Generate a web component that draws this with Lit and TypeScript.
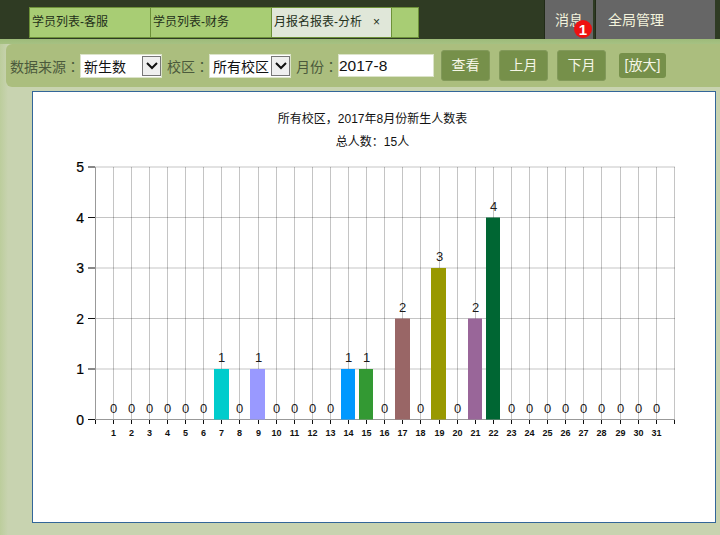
import { LitElement, html, css, svg } from "lit";
import { customElement } from "lit/decorators.js";

const data: Record<number, [number, string, number, number]> = {
  7: [1, "#00cccc", 214, 15], 9: [1, "#9999ff", 250, 15], 14: [1, "#0099ff", 341, 14], 15: [1, "#339933", 359, 14],
  17: [2, "#996666", 395, 15], 19: [3, "#999900", 431, 15], 21: [2, "#996699", 468, 14], 22: [4, "#006633", 486, 14],
};
const X0 = 112.7, STEP = 18.1, Y0 = 419.5, YSTEP = 50.5;
const dx = (d: number) => Math.round(X0 + STEP * (d - 1));
const days = Array.from({ length: 31 }, (_, i) => i + 1);
const levels = [0, 1, 2, 3, 4, 5];

@customElement("app-root")
export class AppRoot extends LitElement {
  static styles = css`
    :host { display: block; width: 720px; height: 535px; overflow: hidden; background: linear-gradient(to right, #bccd9c 0, #c8d3b0 8px); font-family: "Liberation Sans", "Noto Sans CJK SC", sans-serif; }
    .top { height: 39px; background: #2f3b23; display: flex; box-sizing: border-box; }
    .tabs { display: flex; margin: 7px 0 0 29px; height: 32px; }
    .tab { box-sizing: border-box; width: 121px; height: 31px; background: #a8cd74; border: 1px solid #6d9139; border-right: 0; font-size: 12px; color: #24301a; padding-left: 2px; line-height: 29px; display: flex; justify-content: space-between; }
    .tab.active { width: 120px; background: #e0e7d9; }
    .tab.active .x { margin-right: 11px; font-size: 12px; }
    .tab.end { width: 28px; border-right: 1px solid #6d9139; }
    .right { margin-left: auto; display: flex; gap: 2px; margin-right: 5px; }
    .nav { height: 39px; background: #666; color: #f3f3dc; font-size: 14px; line-height: 40px; box-sizing: border-box; position: relative; border-left: 1px solid #222b18; }
    .nav.msg { width: 49px; padding-left: 10px; }
    .nav.all { width: 120px; padding-left: 12px; }
    .badge { position: absolute; left: 29px; top: 20px; width: 18px; height: 18px; border-radius: 50%; background: #ee1111; color: #fff; font-size: 15px; font-weight: bold; line-height: 19px; text-align: center; }
    .band { height: 48px; padding: 5px 0 0 6px; background: linear-gradient(to bottom, #9dbb79 0, #a6c183 5px, transparent 5px); box-sizing: border-box; }
    .toolbar { height: 43px; box-sizing: border-box; background: #abbe7e; border-radius: 6px 0 0 6px; display: flex; align-items: center; padding-left: 4px; font-size: 14px; color: #4b5a3c; }
    .c { font-family: "Noto Sans CJK TC", sans-serif; }
    .sel { box-sizing: border-box; width: 82px; height: 24px; background: #fff; border: 1px solid #dbe3c9; display: flex; align-items: center; color: #111; font-size: 14px; padding-left: 3px; position: relative; }
    .arrow { position: absolute; right: 0; top: 1px; width: 19px; height: 20px; box-sizing: border-box; border: 1px solid #777; background: #efefef; display: flex; align-items: center; justify-content: center; }
    .label2 { margin-left: 5px; }
    .input { box-sizing: border-box; width: 96px; height: 23px; margin-left: 0; background: #fff; border: 1px solid #dbe3c9; color: #111; font-size: 15.5px; line-height: 21px; padding-left: 0; }
    .btn { box-sizing: border-box; width: 49px; height: 31px; background: #76904a; border-radius: 3px; color: #f5f6e6; font-size: 14px; line-height: 29px; text-align: center; border: 1px solid #82995a; }
    .btn.first { margin-left: 7px; }
    .btn.gap { margin-left: 9px; }
    .zoom { box-sizing: border-box; width: 47px; height: 25px; margin-left: 13px; background: #76904a; border-radius: 3px; color: #f5f6e6; font-size: 14px; line-height: 25px; text-align: center; }
    .panel { box-sizing: border-box; margin: 4px 0 0 32px; width: 684px; height: 432px; background: #fff; border: 1px solid #336699; }
    svg { display: block; }
    .t { font-size: 12px; fill: #111; text-anchor: middle; }
    .v { font-size: 13px; fill: #1c1a1a; text-anchor: middle; }
    .yl { font-size: 14px; fill: #000; text-anchor: end; stroke: #000; stroke-width: 0.2px; }
    .xl { font-size: 9px; fill: #111; text-anchor: middle; font-weight: bold; }
  `;

  private chart() {
    return svg`
      <text class="t" x="372.5" y="123">所有校区，2017年8月份新生人数表</text>
      <text class="t" x="372.5" y="146">总人数：15人</text>
      ${levels.slice(1).map((l) => svg`<line x1="95" x2="675" y1=${Y0 - l * YSTEP} y2=${Y0 - l * YSTEP} stroke="#000" stroke-opacity="0.23" />`)}
      ${days.map((d) => svg`<line x1=${dx(d) + 0.5} x2=${dx(d) + 0.5} y1="167" y2="419" stroke="#000" stroke-opacity="0.23" />`)}
      <line x1="674.5" x2="674.5" y1="167" y2="419" stroke="#000" stroke-opacity="0.23" />
      <line x1="95.5" x2="95.5" y1="167" y2="420" stroke="#999" />
      <line x1="95" x2="675" y1="419.5" y2="419.5" stroke="#999" />
      ${levels.map((l) => svg`
        <line x1="88" x2="95" y1=${Y0 - l * YSTEP} y2=${Y0 - l * YSTEP} stroke="#111" />
        <text class="yl" x="84" y=${Y0 - l * YSTEP + 5}>${l}</text>`)}
      <line x1="95.5" x2="95.5" y1="420" y2="424" stroke="#111" />
      <line x1="674.5" x2="674.5" y1="420" y2="424" stroke="#111" />
      ${days.map((d) => {
        const [v, color, bx, bw] = data[d] ?? [0, "", 0, 0];
        const cx = dx(d) + 0.5;
        return svg`
          <line x1=${cx} x2=${cx} y1="420" y2="424" stroke="#111" />
          ${v > 0 ? svg`<rect x=${bx} y=${Y0 - v * YSTEP} width=${bw} height=${v * YSTEP} fill=${color} />` : ""}
          <text class="v" x=${cx} y=${Y0 - v * YSTEP - 7}>${v}</text>
          <text class="xl" x=${cx} y="436">${d}</text>`;
      })}
    `;
  }

  private arrow() {
    return html`<span class="arrow"><svg width="12" height="8" viewBox="0 0 12 8"><path d="M1 1l5 5 5-5" fill="none" stroke="#111" stroke-width="2" /></svg></span>`;
  }

  render() {
    return html`
      <div class="top">
        <div class="tabs">
          <div class="tab">学员列表-客服</div>
          <div class="tab">学员列表-财务</div>
          <div class="tab active"><span>月报名报表-分析</span><span class="x">×</span></div>
          <div class="tab end"></div>
        </div>
        <div class="right">
          <div class="nav msg">消息<span class="badge">1</span></div>
          <div class="nav all">全局管理</div>
        </div>
      </div>
      <div class="band">
        <div class="toolbar">
          <span>数据来源<span class="c">：</span></span>
          <div class="sel">新生数${this.arrow()}</div>
          <span class="label2">校区<span class="c">：</span></span>
          <div class="sel">所有校区${this.arrow()}</div>
          <span class="label2">月份<span class="c">：</span></span>
          <div class="input">2017-8</div>
          <div class="btn first">查看</div>
          <div class="btn gap">上月</div>
          <div class="btn gap">下月</div>
          <div class="zoom">[放大]</div>
        </div>
      </div>
      <div class="panel">
        <svg width="682" height="430" viewBox="33 92 682 430">${this.chart()}</svg>
      </div>
    `;
  }
}
